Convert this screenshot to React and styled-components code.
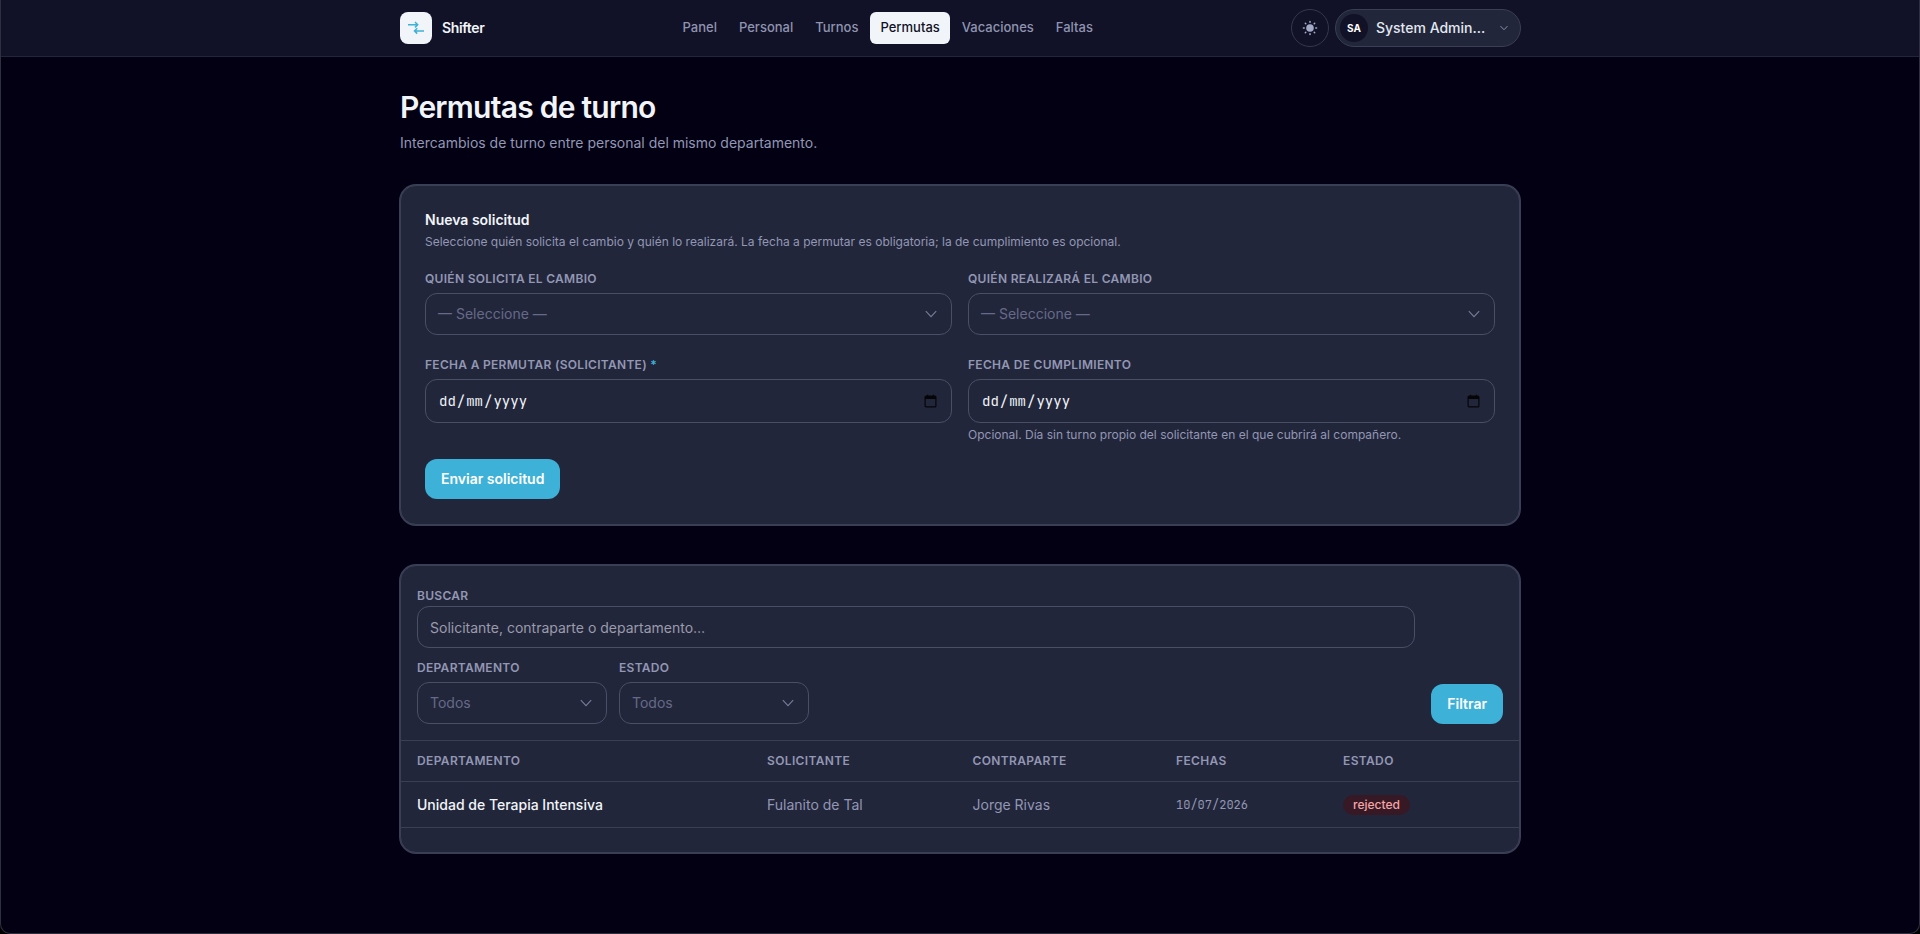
import React from 'react';
import styled, { createGlobalStyle, css } from 'styled-components';

const GlobalStyle = createGlobalStyle`
  * { box-sizing: border-box; }
  body {
    margin: 0;
    background: #000;
    color: #f1f5f9;
    font-family: Inter, "Liberation Sans", sans-serif;
    font-size: 14px;
    line-height: 20px;
    -webkit-font-smoothing: antialiased;
  }
  h1, h2, p { margin: 0; }
  button, input { font: inherit; }
`;

const Page = styled.div`
  height: 934px;
  overflow: hidden;
  background: #030014;
  border: 1px solid #2f2f3e;
  border-top: 0;
  border-radius: 0 0 10px 10px;
`;

const Header = styled.header`
  height: 57px;
  background: #111127;
  border-bottom: 1px solid #22263b;
`;

const Bar = styled.div`
  width: 1120px;
  height: 56px;
  margin: 0 auto;
  display: flex;
  justify-content: space-between;
  align-items: center;
`;

const Brand = styled.div`
  display: flex;
  align-items: center;
  gap: 10px;
  font-weight: 600;
  letter-spacing: -0.35px;
`;

const Logo = styled.span`
  display: flex;
  align-items: center;
  justify-content: center;
  width: 32px;
  height: 32px;
  border-radius: 8px;
  background: #f1f5f9;
`;

const Nav = styled.nav`
  display: flex;
  gap: 2px;
`;

const NavLink = styled.a`
  height: 32px;
  padding: 5px 10px 7px;
  border-radius: 6px;
  font-size: 13px;
  font-weight: 500;
  color: ${p => (p.$active ? '#111127' : '#8f94b0')};
  background: ${p => (p.$active ? '#f1f5f9' : 'transparent')};
`;

const Actions = styled.div`
  display: flex;
  justify-content: flex-end;
  gap: 6px;
  margin-right: -1px;
`;

const ThemeButton = styled.button`
  display: flex;
  align-items: center;
  justify-content: center;
  width: 38px;
  height: 38px;
  padding: 0;
  border: 1px solid #34384e;
  border-radius: 50%;
  background: transparent;
  color: #a3abc6;
`;

const UserButton = styled.button`
  display: flex;
  align-items: center;
  width: 186px;
  height: 38px;
  padding: 0 12px 0 4px;
  border: 1px solid #3a3f55;
  border-radius: 19px;
  background: #22263b;
  color: #e2e8f0;
  font-weight: 500;
  white-space: nowrap;
`;

const Avatar = styled.span`
  width: 28px;
  height: 28px;
  margin-right: 8px;
  border-radius: 50%;
  background: #111127;
  color: #fff;
  font-size: 10px;
  font-weight: 700;
  line-height: 28px;
  text-align: center;
`;

const UserName = styled.span`
  flex: 1;
  text-align: left;
`;

const Main = styled.main`
  width: 1120px;
  margin: 0 auto;
  padding-top: 32px;
`;

const Title = styled.h1`
  font-size: 30px;
  line-height: 36px;
  font-weight: 600;
  letter-spacing: -0.75px;
`;

const Subtitle = styled.p`
  margin: 8px 0 32px;
  color: #9297b3;
`;

const Card = styled.section`
  border: 1px solid #3a3f55;
  border-radius: 16px;
  box-shadow: 0 0 0 1px #3a3f55;
  background: #22263b;
  & + & { margin-top: 40px; }
`;

const FormCard = styled(Card)`
  height: 340px;
  padding: 24px;
`;

const CardTitle = styled.h2`
  font-size: 14px;
  line-height: 20px;
  font-weight: 600;
`;

const Small = styled.p`
  margin-top: 4px;
  color: #9297b3;
  font-size: 12px;
  line-height: 16px;
`;

const FormGrid = styled.div`
  display: grid;
  grid-template-columns: 1fr 1fr;
  gap: 22px 16px;
  margin-top: 21px;
`;

const Field = styled.div`
  width: ${p => (p.$width ? `${p.$width}px` : 'auto')};
`;

const Label = styled.label`
  display: block;
  margin-bottom: ${p => (p.$tight ? 2 : 6)}px;
  color: #9297b3;
  font-size: 12px;
  line-height: 16px;
  font-weight: 600;
  letter-spacing: 0.3px;
  text-transform: uppercase;
`;

const Required = styled.span`
  color: #3db1d7;
`;

const control = css`
  display: flex;
  align-items: center;
  justify-content: space-between;
  width: 100%;
  height: 42px;
  padding: 0 12px;
  border: 1px solid #4b4f66;
  border-radius: 12px;
  background: transparent;
`;

const Select = styled.div`
  ${control}
  padding-right: 14px;
  color: #666a88;
`;

const DateBox = styled.div`
  ${control}
  height: 44px;
  padding: 0 14px 0 12px;
  color: #f1f5f9;
  font-family: "JetBrains Mono", "Liberation Mono", monospace;
`;

const DatePart = styled.span`
  padding: 0 1px;
`;

const SearchInput = styled.input`
  ${control}
  color: #f1f5f9;
  outline: 0;
  &::placeholder { color: #9a9bab; opacity: 1; }
`;

const PrimaryButton = styled.button`
  height: 40px;
  padding: 0 16px;
  border: 0;
  border-radius: 12px;
  background: #3db1d7;
  color: #fff;
  font-weight: 600;
`;

const FormActions = styled.div`
  margin-top: 16px;
`;

const ListCard = styled(Card)`
  height: 288px;
`;

const Filters = styled.div`
  display: flex;
  align-items: flex-end;
  gap: 16px;
  padding: 22px 16px 16px;
`;

const FilterFields = styled.div`
  flex: 1;
`;

const FilterRow = styled.div`
  display: flex;
  gap: 12px;
  margin-top: 12px;
`;

const Table = styled.table`
  width: 100%;
  table-layout: fixed;
  border-collapse: separate;
  border-spacing: 0;
  border-top: 1px solid #3a3f55;
`;

const Th = styled.th`
  height: 41px;
  padding: 0 16px;
  border-bottom: 1px solid #3a3f55;
  color: #9297b3;
  font-size: 12px;
  line-height: 16px;
  font-weight: 600;
  letter-spacing: 0.36px;
  text-align: left;
  text-transform: uppercase;
`;

const Td = styled.td`
  height: 46px;
  padding: 0 16px;
  border-bottom: 1px solid #3a3f55;
  color: ${p => (p.$strong ? '#f1f5f9' : '#9297b3')};
  font-weight: ${p => (p.$strong ? 500 : 400)};
  ${p => p.$mono && css`
    font-family: "JetBrains Mono", "Liberation Mono", monospace;
    font-size: 12px;
  `}
`;

const Badge = styled.span`
  display: block;
  width: fit-content;
  padding: 2px 10px;
  border-radius: 10px;
  background: #371925;
  color: #f6a5a7;
  font-size: 12px;
  line-height: 16px;
  font-weight: 500;
`;

const SwapIcon = () => (
  <svg width="18" height="18" viewBox="0 0 18 18" fill="none" stroke="#3db1d7" strokeWidth="1.5">
    <path d="M1 5.7h9.4M8 3l2.7 2.7L8 8.4M17 11.9H7.8M10.2 9.2l-2.7 2.7 2.7 2.7" />
  </svg>
);

const SunIcon = () => (
  <svg width="16" height="16" viewBox="0 0 16 16" stroke="currentColor" strokeWidth="1.5" strokeLinecap="round">
    <circle cx="8" cy="8" r="3.8" fill="currentColor" stroke="none" />
    <path d="M8 1.4v.8M8 13.8v.8M1.4 8h.8M13.8 8h.8M3.3 3.3l.5.5M12.2 12.2l.5.5M3.3 12.7l.5-.5M12.2 3.8l.5-.5" />
  </svg>
);

const Chevron = ({ size = 12, color = '#777c98', stroke = 1.1 }) => (
  <svg width={size} height={size} viewBox="0 0 12 12" fill="none" stroke={color} strokeWidth={stroke}>
    <path d="M.8 3.2 6 8.6l5.2-5.4" />
  </svg>
);

const CalendarIcon = () => (
  <svg width="13" height="14" viewBox="0 0 13 14" fill="none">
    <rect x="1.1" y="2.1" width="10.8" height="10.8" rx="1" stroke="#050508" strokeWidth="1.2" />
    <path d="M1 2.1h11v2.9H1zM3 .8h1.2V3H3zM8.8.8H10V3H8.8z" fill="#050508" />
  </svg>
);

const links = ['Panel', 'Personal', 'Turnos', 'Permutas', 'Vacaciones', 'Faltas'];

const SelectField = ({ label, value, width }) => (
  <Field $width={width}>
    <Label>{label}</Label>
    <Select>{value}<Chevron /></Select>
  </Field>
);

const DateField = ({ label, required, hint }) => (
  <Field>
    <Label>{label}{required && <Required> *</Required>}</Label>
    <DateBox>
      <span><DatePart>dd</DatePart>/<DatePart>mm</DatePart>/<DatePart>yyyy</DatePart></span>
      <CalendarIcon />
    </DateBox>
    {hint && <Small>{hint}</Small>}
  </Field>
);

const App = () => (
  <Page>
    <GlobalStyle />
    <Header>
      <Bar>
        <Brand><Logo><SwapIcon /></Logo>Shifter</Brand>
        <Nav>
          {links.map(l => <NavLink key={l} $active={l === 'Permutas'}>{l}</NavLink>)}
        </Nav>
        <Actions>
          <ThemeButton><SunIcon /></ThemeButton>
          <UserButton>
            <Avatar>SA</Avatar>
            <UserName>System Admin…</UserName>
            <Chevron size={8} color="#8a90ab" stroke={1.5} />
          </UserButton>
        </Actions>
      </Bar>
    </Header>
    <Main>
      <Title>Permutas de turno</Title>
      <Subtitle>Intercambios de turno entre personal del mismo departamento.</Subtitle>
      <FormCard>
        <CardTitle>Nueva solicitud</CardTitle>
        <Small>
          Seleccione quién solicita el cambio y quién lo realizará. La fecha a permutar es obligatoria; la de cumplimiento es opcional.
        </Small>
        <FormGrid>
          <SelectField label="Quién solicita el cambio" value="— Seleccione —" />
          <SelectField label="Quién realizará el cambio" value="— Seleccione —" />
          <DateField label="Fecha a permutar (solicitante)" required />
          <DateField
            label="Fecha de cumplimiento"
            hint="Opcional. Día sin turno propio del solicitante en el que cubrirá al compañero."
          />
        </FormGrid>
        <FormActions><PrimaryButton>Enviar solicitud</PrimaryButton></FormActions>
      </FormCard>
      <ListCard>
        <Filters>
          <FilterFields>
            <Label $tight>Buscar</Label>
            <SearchInput placeholder="Solicitante, contraparte o departamento…" />
            <FilterRow>
              <SelectField label="Departamento" value="Todos" width={190} />
              <SelectField label="Estado" value="Todos" width={190} />
            </FilterRow>
          </FilterFields>
          <PrimaryButton>Filtrar</PrimaryButton>
        </Filters>
        <Table>
          <colgroup>
            <col width="350" />
            <col width="205.5" />
            <col width="203.5" />
            <col width="167" />
            <col />
          </colgroup>
          <thead>
            <tr>
              <Th>Departamento</Th>
              <Th>Solicitante</Th>
              <Th>Contraparte</Th>
              <Th>Fechas</Th>
              <Th>Estado</Th>
            </tr>
          </thead>
          <tbody>
            <tr>
              <Td $strong>Unidad de Terapia Intensiva</Td>
              <Td>Fulanito de Tal</Td>
              <Td>Jorge Rivas</Td>
              <Td $mono>10/07/2026</Td>
              <Td><Badge>rejected</Badge></Td>
            </tr>
          </tbody>
        </Table>
      </ListCard>
    </Main>
  </Page>
);

export default App;
